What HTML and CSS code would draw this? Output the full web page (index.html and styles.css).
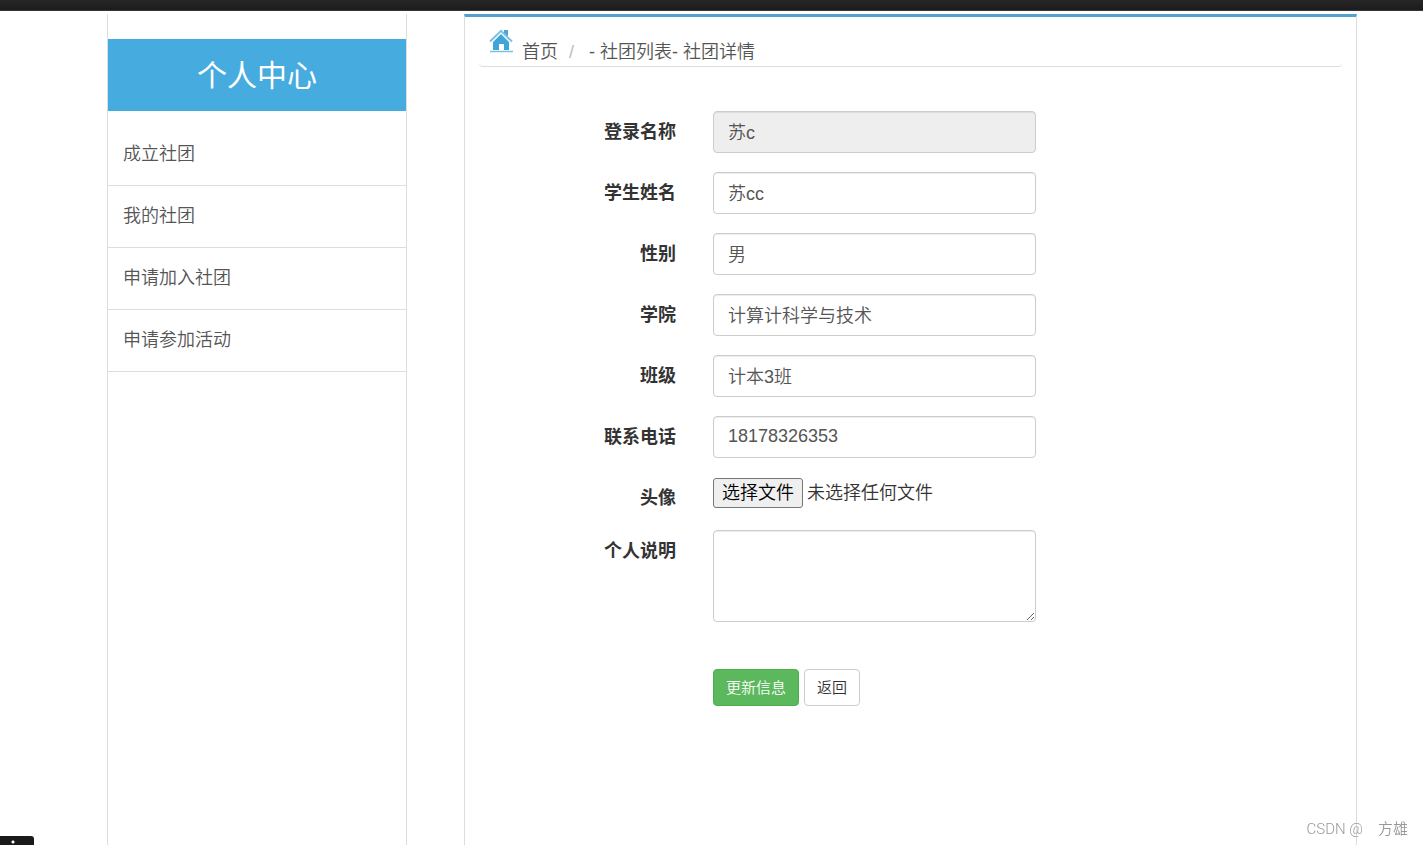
FILE: index.html
```html
<!DOCTYPE html>
<html lang="zh-CN">
<head>
<meta charset="utf-8">
<meta name="viewport" content="width=device-width, initial-scale=1">
<title>个人中心</title>
<link rel="stylesheet" href="styles.css">
</head>
<body>
<div class="topbar"></div>
<div class="page">
  <aside class="sidebar">
    <h1 class="sidebar-title">个人中心</h1>
    <nav class="menu">
      <a class="menu-item" href="#">成立社团</a>
      <a class="menu-item" href="#">我的社团</a>
      <a class="menu-item" href="#">申请加入社团</a>
      <a class="menu-item" href="#">申请参加活动</a>
    </nav>
  </aside>
  <main class="panel">
    <nav class="breadcrumb">
      <svg class="home" viewBox="0 0 24 24" aria-hidden="true">
        <path d="M15 1h4v8l-4-4z" fill="#4ba6d3"/>
        <path d="M1 12.500 12 1.800l11 10.700" fill="none" stroke="#7cc0e0" stroke-width="2"/>
        <path d="M4 13l8-8 8 8v8h-5v-6h-5v6H4z" fill="#3fa5d8"/>
        <path d="M1 22.500h23" stroke="#7cc0e0" stroke-width="1.500"/>
      </svg>
      <a class="crumb" href="#">首页</a>
      <span class="slash">/</span>
      <span>- 社团列表- 社团详情</span>
    </nav>
    <form class="form">
      <div class="row">
        <label class="label" for="login">登录名称</label>
        <input class="control" id="login" type="text" value="苏c" readonly>
      </div>
      <div class="row">
        <label class="label" for="name">学生姓名</label>
        <input class="control" id="name" type="text" value="苏cc">
      </div>
      <div class="row">
        <label class="label" for="gender">性别</label>
        <input class="control" id="gender" type="text" value="男">
      </div>
      <div class="row">
        <label class="label" for="college">学院</label>
        <input class="control" id="college" type="text" value="计算计科学与技术">
      </div>
      <div class="row">
        <label class="label" for="class">班级</label>
        <input class="control" id="class" type="text" value="计本3班">
      </div>
      <div class="row">
        <label class="label" for="phone">联系电话</label>
        <input class="control" id="phone" type="text" value="18178326353">
      </div>
      <div class="row">
        <label class="label" for="avatar">头像</label>
        <div class="file">
          <input class="file-input" id="avatar" type="file">
          <label class="file-button" for="avatar">选择文件</label>
          <span>未选择任何文件</span>
        </div>
      </div>
      <div class="row">
        <label class="label" for="about">个人说明</label>
        <textarea class="control area" id="about"></textarea>
      </div>
      <div class="row actions-row">
        <div class="actions">
          <button class="btn btn-save" type="button">更新信息</button>
          <button class="btn" type="button">返回</button>
        </div>
      </div>
    </form>
  </main>
</div>
<div class="status"></div>
<div class="watermark"><span>CSDN @</span><span>方雄</span></div>
</body>
</html>
```
FILE: styles.css
```css
* { box-sizing: border-box; }

body {
  margin: 0;
  min-height: 100vh;
  display: flex;
  flex-direction: column;
  background: #fff;
  color: #333;
  font: 350 18px/24px "Liberation Sans", "Noto Sans CJK SC", sans-serif;
}

a { color: inherit; text-decoration: none; }

.topbar {
  height: 11px;
  background: linear-gradient(#262626, #1c1c1c);
  border-bottom: 1px solid #3a3438;
}

.page {
  flex: 1;
  display: grid;
  grid-template-columns: 300fr 893fr;
  column-gap: 57px;
  padding: 3px 66px 0 107px;
}

.sidebar {
  border: solid #ddd;
  border-width: 0 1px;
  padding-top: 25px;
}

.sidebar-title {
  margin: 0 0 13px;
  padding: 17px 16px 15px;
  background: #46abde;
  color: #fff;
  font-size: 30px;
  font-weight: 400;
  line-height: 40px;
  text-align: center;
}

.menu-item {
  display: block;
  padding: 18px 15px 19px;
  border-bottom: 1px solid #ddd;
  color: #555;
}

.panel {
  border: 1px solid #ddd;
  border-top: 3px solid #52a2cd;
  border-bottom: 0;
  padding: 0 14px;
}

.breadcrumb {
  display: flex;
  align-items: flex-end;
  height: 50px;
  padding: 0 10px 2px;
  border-bottom: 1px solid #ddd;
  border-radius: 4px;
  color: #555;
}

.home {
  width: 24px;
  height: 24px;
  margin-bottom: 11px;
}

.crumb { margin-left: 9px; }

.slash { margin: 0 15px 0 11px; color: #bbb; }

.form {
  display: grid;
  row-gap: 19px;
  padding: 44px 0;
}

.row {
  display: grid;
  grid-template-columns: 197fr 323fr 269fr;
  column-gap: 37px;
}

.label {
  padding-top: 9px;
  font-weight: 700;
  text-align: right;
}

.control {
  width: 100%;
  height: 42px;
  padding: 6px 14px 8px;
  border: 1px solid #ccc;
  border-radius: 4px;
  background: #fff;
  box-shadow: inset 0 1px 1px rgba(0, 0, 0, .075);
  color: #555;
  font: inherit;
}

.control[readonly] { background: #eee; }

.area {
  display: block;
  height: 92px;
  resize: both;
}

.file {
  display: flex;
  align-items: flex-start;
  gap: 4px;
  height: 34px;
  padding-top: 1px;
  line-height: 30px;
  white-space: nowrap;
}

.file-input {
  position: absolute;
  width: 1px;
  height: 1px;
  opacity: 0;
}

.file-button {
  padding: 0 8px;
  border: 1px solid #767676;
  border-radius: 3px;
  background: #efefef;
  color: #000;
  line-height: 28px;
}

.actions-row { padding-top: 28px; }

.actions {
  grid-column: 2;
  display: flex;
  gap: 5px;
}

.btn {
  padding: 0 12px;
  border: 1px solid #ccc;
  border-radius: 4px;
  background: #fff;
  color: #333;
  font: inherit;
  font-size: 15px;
  line-height: 35px;
}

.btn-save {
  border-color: #4cae4c;
  background: #5cb85c;
  color: #fff;
}

.status {
  position: fixed;
  left: 0;
  bottom: 0;
  width: 34px;
  height: 9px;
  border-radius: 0 3px 0 0;
  background: radial-gradient(circle at 13px 6px, #fff 1px, #1a1a1a 2px);
}

.watermark {
  position: fixed;
  right: 15px;
  bottom: 4px;
  display: flex;
  gap: 15px;
  color: #999;
  font-family: Roboto, "Noto Sans CJK SC", sans-serif;
  font-size: 15px;
}
```
